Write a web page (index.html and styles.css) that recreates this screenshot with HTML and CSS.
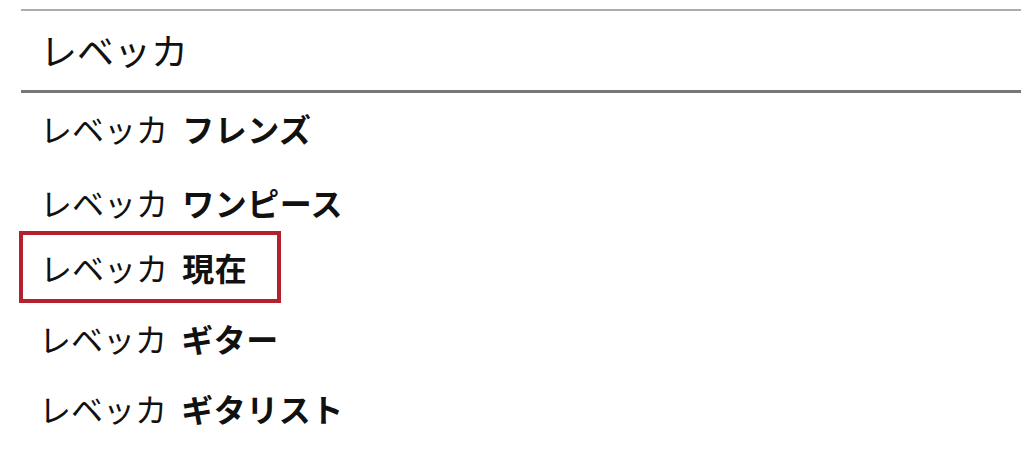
FILE: index.html
```html
<!DOCTYPE html>
<html lang="ja">
<head>
<meta charset="utf-8">
<link rel="stylesheet" href="styles.css">
</head>
<body>
<div class="panel">
  <div class="search">レベッカ</div>
  <ul class="suggest">
    <li class="item">レベッカ <b>フレンズ</b></li>
    <li class="item item-2">レベッカ <b>ワンピース</b></li>
    <li class="item item-hl">レベッカ <b>現在</b></li>
    <li class="item item-4">レベッカ <b>ギター</b></li>
    <li class="item item-4">レベッカ <b>ギタリスト</b></li>
  </ul>
</div>
</body>
</html>
```

FILE: styles.css
```css
html, body {
  margin: 0;
  padding: 0;
  background: #ffffff;
}
body {
  font-family: "Noto Sans CJK JP", "Noto Sans", sans-serif;
  color: #111111;
  width: 1024px;
  height: 459px;
  overflow: hidden;
}
.panel {
  margin: 9px 3px 0 21px;
  border-top: 2px solid #acacac;
}
.search {
  height: 82px;
  box-sizing: border-box;
  display: flex;
  align-items: center;
  padding-left: 19px;
  padding-bottom: 2px;
  font-size: 37px;
  border-bottom: 3px solid #777777;
}
.suggest {
  list-style: none;
  margin: 0;
  padding: 0;
}
.item {
  height: 70px;
  display: flex;
  align-items: center;
  padding-left: 19px;
  font-size: 32px;
  white-space: pre;
}
.item b {
  font-weight: 700;
  margin-left: 7px;
  letter-spacing: 0.5px;
}
.item-2 {
  box-sizing: border-box;
  height: 68px;
  padding-top: 10px;
}
.item-hl {
  box-sizing: border-box;
  height: 72px;
  width: 262px;
  margin-left: -2px;
  padding-left: 17px;
  border: 4px solid #b3202e;
}
.item-4 {
  padding-left: 18px;
}
```
